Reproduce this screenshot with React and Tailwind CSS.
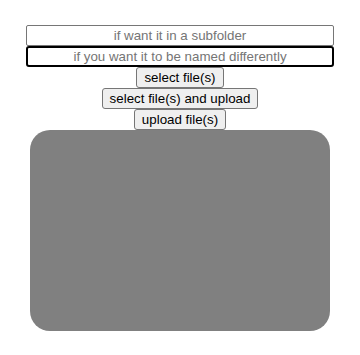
export default function App() {
    const buttons = ["select file(s)", "select file(s) and upload", "upload file(s)"];

    return (
        <div className="w-[360px] h-[355px] bg-white flex flex-col items-center pt-[25px] font-['Liberation_Sans',Arial,sans-serif] text-[13.33px] leading-[15px]">
            {/* INPUTS */}
            <input
                className="w-[308px] h-[21px] px-[2px] border border-[#767676] rounded-[2px] text-center placeholder:text-[#757575] outline-none"
                placeholder="if want it in a subfolder"
            />
            <input
                className="w-[308px] h-[21px] px-[2px] border-2 border-black rounded-[3px] text-center placeholder:text-[#757575] outline-none"
                placeholder="if you want it to be named differently"
            />

            {/* BUTTONS */}
            {buttons.map((b, i) => (
                <div key={i} className="h-[21px] flex items-start">
                    <button className="h-[21px] px-[7px] bg-[#efefef] border border-[#767676] rounded-[3px] text-black">
                        {b}
                    </button>
                </div>
            ))}

            {/* DROP AREA */}
            <div className="w-[300px] h-[201px] bg-[#808080] rounded-[20px]" />
        </div>
    );
}
